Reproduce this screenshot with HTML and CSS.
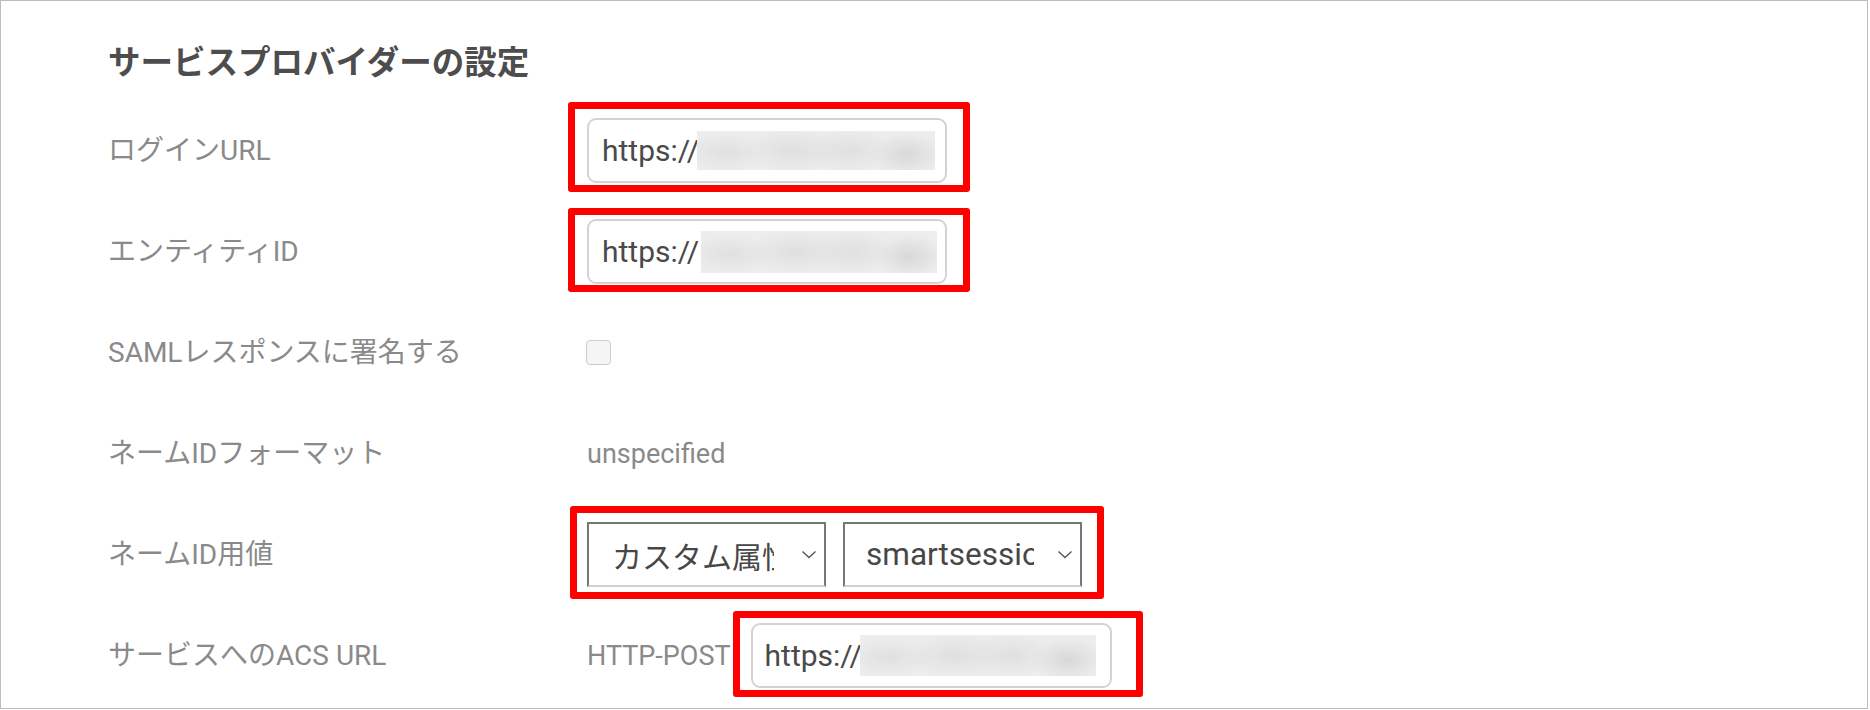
FILE: index.html
```html
<!DOCTYPE html>
<html lang="ja">
<head>
<meta charset="utf-8">
<title>サービスプロバイダーの設定</title>
<link rel="stylesheet" href="styles.css">
</head>
<body>
<div class="frame">
  <h2 class="title">サービスプロバイダーの設定</h2>
  <div class="rows">
    <div class="row">
      <div class="label">ログインURL</div>
      <div class="value">
        <div class="marked m1">
          <div class="field"><span class="txt">https://</span><span class="blur"></span></div>
          <span class="mark"></span>
        </div>
      </div>
    </div>
    <div class="row">
      <div class="label">エンティティID</div>
      <div class="value">
        <div class="marked m2">
          <div class="field"><span class="txt">https://</span><span class="blur blur-2"></span></div>
          <span class="mark"></span>
        </div>
      </div>
    </div>
    <div class="row">
      <div class="label">SAMLレスポンスに署名する</div>
      <div class="value">
        <span class="checkbox"></span>
      </div>
    </div>
    <div class="row">
      <div class="label">ネームIDフォーマット</div>
      <div class="value">
        <span class="plain">unspecified</span>
      </div>
    </div>
    <div class="row">
      <div class="label">ネームID用値</div>
      <div class="value">
        <div class="marked m3">
          <div class="selects">
            <div class="select">
              <span class="sel-text">カスタム属性</span>
              <svg class="chev" width="16" height="9" viewBox="0 0 16 9"><polyline points="1.5,1.5 8,7.5 14.5,1.5" fill="none" stroke="#555" stroke-width="1.4"/></svg>
            </div>
            <div class="select">
              <span class="sel-text sel-text-2">smartsessionid</span>
              <svg class="chev" width="16" height="9" viewBox="0 0 16 9"><polyline points="1.5,1.5 8,7.5 14.5,1.5" fill="none" stroke="#555" stroke-width="1.4"/></svg>
            </div>
          </div>
          <span class="mark"></span>
        </div>
      </div>
    </div>
    <div class="row">
      <div class="label">サービスへのACS URL</div>
      <div class="value">
        <span class="plain post">HTTP-POST</span>
        <div class="marked m4">
          <div class="field field-4"><span class="txt">https://</span><span class="blur blur-4"></span></div>
          <span class="mark"></span>
        </div>
      </div>
    </div>
  </div>
</div>
</body>
</html>
```

FILE: styles.css
```css
* { box-sizing: border-box; }

html, body {
  margin: 0;
  padding: 0;
  background: #ffffff;
}

body {
  font-family: Roboto, "Noto Sans CJK JP", sans-serif;
}

.frame {
  width: 1868px;
  height: 709px;
  border: 1px solid #bdbdbd;
  padding: 39px 0 0 107px;
  overflow: hidden;
}

.title {
  margin: 0;
  height: 40px;
  line-height: 40px;
  font-size: 32.5px;
  font-weight: 700;
  color: #4d4d4d;
  font-family: "Noto Sans CJK JP", sans-serif;
}

.rows {
  margin-top: 20px;
  display: flex;
  flex-direction: column;
}

.row {
  height: 101px;
  display: flex;
  align-items: center;
}

.label {
  width: 479px;
  flex: none;
  font-size: 28px;
  color: #8a8a8a;
  line-height: 36px;
}

.value {
  display: flex;
  align-items: center;
}

.marked {
  position: relative;
  display: flex;
}

.mark {
  position: absolute;
  border: 7px solid #ff0000;
  border-radius: 3px;
  pointer-events: none;
}

.m1 .mark { left: -19px; right: -23px; top: -16px; bottom: -9px; }
.m2 .mark { left: -19px; right: -23px; top: -11px; bottom: -8px; }
.m3 .mark { left: -17px; right: -22px; top: -16px; bottom: -12px; }
.m4 .mark { left: -18px; right: -31px; top: -12px; bottom: -9px; }

.field {
  width: 360px;
  height: 65px;
  border: 2px solid #d3d3d3;
  border-radius: 9px;
  padding-left: 13px;
  display: flex;
  align-items: center;
  overflow: hidden;
}

.field-4 {
  width: 361px;
  padding-left: 12px;
}

.txt {
  font-size: 30px;
  color: #4a4a4a;
  white-space: nowrap;
  flex: none;
}

.blur {
  flex: none;
  width: 238px;
  height: 39px;
  margin-left: -2px;
  background:
    radial-gradient(ellipse 44px 20px at 12% 55%, #e0e0e0, rgba(224,224,224,0) 100%),
    radial-gradient(ellipse 50px 22px at 40% 50%, #dfdfdf, rgba(223,223,223,0) 100%),
    radial-gradient(ellipse 46px 22px at 64% 50%, #e0e0e0, rgba(224,224,224,0) 100%),
    radial-gradient(ellipse 36px 22px at 88% 60%, #d8d8d8, rgba(216,216,216,0) 100%),
    #ededed;
}

.blur-2 {
  height: 42px;
  width: 236px;
  margin-left: 2px;
}

.blur-4 {
  height: 41px;
  width: 236px;
}

.checkbox {
  display: block;
  width: 25px;
  height: 25px;
  margin-left: -1px;
  border: 1.5px solid #cccccc;
  border-radius: 4px;
  background: #f5f5f5;
}

.plain {
  font-size: 27px;
  color: #8a8a8a;
  white-space: nowrap;
}

.post {
  font-size: 27px;
  margin-right: 20px;
}

.selects {
  display: flex;
  gap: 17px;
}

.select {
  width: 239px;
  height: 65px;
  border: 2px solid #777777;
  border-bottom-color: #cfcfcf;
  padding-left: 23px;
  padding-right: 7px;
  display: flex;
  align-items: center;
}

.sel-text {
  width: 162px;
  flex: none;
  overflow: hidden;
  white-space: nowrap;
  font-size: 30px;
  color: #474747;
  font-family: Roboto, "Noto Sans CJK JP", sans-serif;
}

.sel-text-2 {
  width: 168px;
  margin-left: -2px;
  font-size: 31.5px;
}

.chev {
  flex: none;
  margin-left: auto;
  display: block;
}
```
